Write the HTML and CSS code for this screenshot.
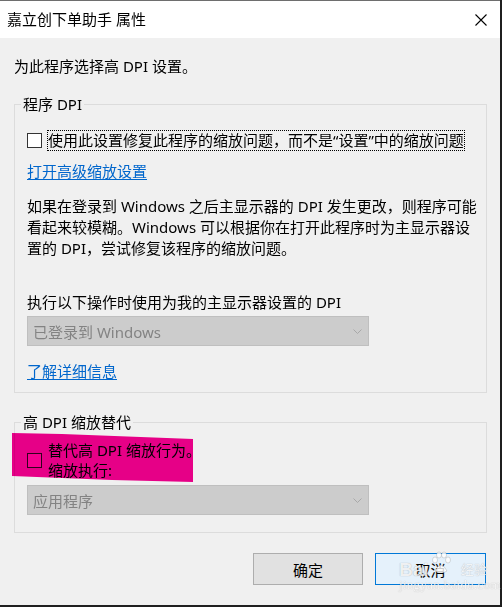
FILE: index.html
```html
<!DOCTYPE html>
<html lang="zh-CN">
<head>
    <meta charset="UTF-8">
    <meta name="viewport" content="width=device-width, initial-scale=1.0">
    <title>嘉立创下单助手 属性</title>
    <link rel="stylesheet" href="styles.css">
</head>
<body>

    <div class="window">
        <header class="titlebar">
            <span>嘉立创下单助手 属性</span>
            <svg class="close" viewBox="0 0 12 12"><path d="M0.5 0.5 L11.5 11.5 M11.5 0.5 L0.5 11.5" stroke="#000" stroke-width="1.1" fill="none"/></svg>
        </header>

        <main class="content">
            <p class="intro">为此程序选择高 DPI 设置。</p>

            <fieldset class="group group-app">
                <legend>程序 DPI</legend>
                <div class="check">
                    <span class="box"></span>
                    <span class="focus-text">使用此设置修复此程序的缩放问题，而不是“设置”中的缩放问题</span>
                </div>
                <a href="#" class="link link-first">打开高级缩放设置</a>
                <p class="desc">如果在登录到 Windows 之后主显示器的 DPI 发生更改，则程序可能<br>看起来较模糊。Windows 可以根据你在打开此程序时为主显示器设<br>置的 DPI，尝试修复该程序的缩放问题。</p>
                <p class="field-label">执行以下操作时使用为我的主显示器设置的 DPI</p>
                <div class="select">
                    <span>已登录到 Windows</span>
                    <svg class="chevron" viewBox="0 0 9 5"><path d="M0.5 0.5 L4.5 4.5 L8.5 0.5" stroke="#a8a8a8" fill="none"/></svg>
                </div>
                <a href="#" class="link link-more">了解详细信息</a>
            </fieldset>

            <fieldset class="group group-override">
                <legend>高 DPI 缩放替代</legend>
                <div class="check check-two">
                    <span class="box"></span>
                    <span class="two-line">替代高 DPI 缩放行为。<br>缩放执行:</span>
                    <svg class="marker" viewBox="0 0 181 50"><polygon points="0,0 50,1 181,6 181,49 100,47 0,43" fill="#f5008f"/></svg>
                </div>
                <div class="select select-second">
                    <span>应用程序</span>
                    <svg class="chevron" viewBox="0 0 9 5"><path d="M0.5 0.5 L4.5 4.5 L8.5 0.5" stroke="#a8a8a8" fill="none"/></svg>
                </div>
            </fieldset>

            <div class="buttons">
                <button class="btn">确定</button>
                <button class="btn btn-default">取消</button>
                <div class="watermark">
                    <span class="wm-bai">Bai</span>
                    <svg class="wm-paw" viewBox="0 0 20 24">
                        <ellipse cx="4" cy="9" rx="2.5" ry="3" />
                        <ellipse cx="8" cy="4" rx="2.5" ry="3" />
                        <ellipse cx="13" cy="4" rx="2.5" ry="3" />
                        <ellipse cx="17" cy="9" rx="2.5" ry="3" />
                        <path d="M4 20 Q10 8 16 20 Q10 24 4 20 Z" />
                    </svg>
                    <span class="wm-jy">经验</span>
                    <span class="wm-url">jingyan.baidu.com</span>
                </div>
            </div>
        </main>
    </div>

</body>
</html>
```

FILE: styles.css
```css
* {
    box-sizing: border-box;
}
body {
    margin: 0;
    background-color: #1f1f1f;
    font-family: "Noto Sans", "Noto Sans CJK SC", sans-serif;
    font-size: 15px;
    color: #000000;
}
.window {
    width: 500px;
    height: 605px;
    background-color: #f0f0f0;
    border-top: 1px solid #6e6e6e;
}
.titlebar {
    height: 37px;
    background-color: #ffffff;
    display: flex;
    align-items: center;
    justify-content: space-between;
    padding: 0 13px 0 7px;
    line-height: 21px;
}
.close {
    width: 12px;
    height: 12px;
}
.content {
    padding: 18px 13px 0 14px;
}
.intro {
    margin: 0;
    line-height: 21px;
}
.group {
    margin: 17px 0 0;
    border: 1px solid #dcdcdc;
    padding: 15px 6px 10px 12px;
    min-width: 0;
}
.group legend {
    padding: 0 2px;
    margin-left: -6px;
    line-height: 21px;
}
.group-override {
    margin-top: 19px;
    padding-top: 7px;
    padding-bottom: 17px;
}
.check {
    display: flex;
    align-items: center;
    gap: 5px;
    position: relative;
}
.box {
    width: 15px;
    height: 15px;
    border: 1px solid #333333;
    background-color: #ffffff;
    flex: none;
}
.focus-text {
    border: 1px dotted #000000;
    line-height: 19px;
    white-space: nowrap;
}
.check-two {
    gap: 6px;
}
.two-line {
    line-height: 20px;
}
.marker {
    position: absolute;
    left: -15px;
    top: -7px;
    width: 181px;
    height: 50px;
    mix-blend-mode: multiply;
}
.link {
    display: block;
    width: fit-content;
    color: #0066cc;
    line-height: 21px;
    text-decoration: underline;
    text-underline-offset: 2px;
}
.link-first {
    margin-top: 10px;
}
.link-more {
    margin-top: 15px;
}
.desc {
    margin: 14px 0 0;
    line-height: 21px;
    white-space: nowrap;
}
.field-label {
    margin: 33px 0 0;
    line-height: 21px;
}
.select {
    margin-top: 3px;
    width: 342px;
    height: 30px;
    background-color: #cccccc;
    border: 1px solid #bfbfbf;
    color: #838383;
    display: flex;
    align-items: center;
    justify-content: space-between;
    padding: 0 5px 0 5px;
}
.select-second {
    margin-top: 5px;
}
.chevron {
    width: 9px;
    height: 5px;
    margin-right: 1px;
}
.buttons {
    position: relative;
    display: flex;
    justify-content: flex-end;
    gap: 12px;
    margin-top: 20px;
    padding-right: 1px;
}
.btn {
    width: 110px;
    height: 32px;
    background-color: #e1e1e1;
    border: 1px solid #adadad;
    font-family: inherit;
    font-size: 15px;
    color: #000000;
    padding: 0;
}
.btn-default {
    width: 111px;
    background-color: #e5f1fb;
    border-color: #0078d7;
}
.watermark {
    position: absolute;
    left: 371px;
    top: -2px;
    width: 110px;
    height: 42px;
    color: rgba(255, 255, 255, 0.85);
    pointer-events: none;
}
.wm-bai {
    position: absolute;
    left: 14px;
    top: 9px;
    font-family: "Liberation Sans", sans-serif;
    font-weight: bold;
    font-size: 19px;
    line-height: 20px;
    text-shadow: 0 0 1px rgba(0, 0, 0, 0.35);
}
.wm-paw {
    position: absolute;
    left: 46px;
    top: 0;
    width: 20px;
    height: 24px;
    fill: rgba(255, 255, 255, 0.8);
    stroke: rgba(0, 0, 0, 0.2);
    stroke-width: 0.7;
}
.wm-jy {
    position: absolute;
    left: 76px;
    top: 10px;
    font-size: 13px;
    line-height: 16px;
    text-shadow: 0 0 1px rgba(0, 0, 0, 0.35);
}
.wm-url {
    position: absolute;
    left: 14px;
    top: 27px;
    font-family: "Liberation Serif", serif;
    font-size: 13px;
    line-height: 14px;
    letter-spacing: 0.3px;
    text-shadow: 0 0 1px rgba(0, 0, 0, 0.3);
}
```
